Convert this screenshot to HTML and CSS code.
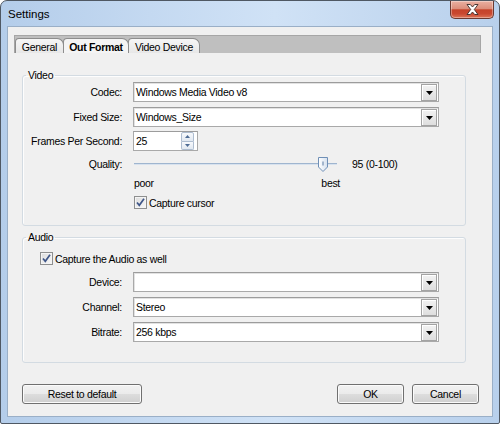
FILE: index.html
```html
<!DOCTYPE html>
<html>
<head>
<meta charset="utf-8">
<title>Settings</title>
<link rel="stylesheet" href="styles.css">
</head>
<body>
<div class="window">
  <div class="titlebar">
    <span class="title">Settings</span>
    <div class="close">
      <svg width="13" height="11" viewBox="0 0 13 11"><path d="M1 0.5 H4.3 L6.5 3 L8.7 0.5 H12 L8.3 5.5 L12 10.5 H8.7 L6.5 8 L4.3 10.5 H1 L4.7 5.5 Z" fill="#fff" stroke="#3a2a28" stroke-width="0.9" stroke-linejoin="round"/></svg>
    </div>
  </div>
  <div class="client">
    <div class="tabs">
      <div class="tab tab-general">General</div>
      <div class="tab tab-out active">Out Format</div>
      <div class="tab tab-video">Video Device</div>
    </div>
    <div class="sheet">
      <fieldset class="group group-video">
        <legend>Video</legend>
        <div class="row">
          <label>Codec:</label>
          <div class="combo"><span>Windows Media Video v8</span><span class="drop"><svg width="7" height="4" viewBox="0 0 7 4"><path d="M0 0H7L3.5 4Z" fill="#000"/></svg></span></div>
        </div>
        <div class="row row-fixed">
          <label>Fixed Size:</label>
          <div class="combo"><span>Windows_Size</span><span class="drop"><svg width="7" height="4" viewBox="0 0 7 4"><path d="M0 0H7L3.5 4Z" fill="#000"/></svg></span></div>
        </div>
        <div class="row row-fps">
          <label>Frames Per Second:</label>
          <div class="spin"><span>25</span>
            <span class="spin-btns">
              <span class="spin-up"><svg width="5" height="3" viewBox="0 0 5 3"><path d="M0 3H5L2.5 0Z" fill="#4d6b94"/></svg></span>
              <span class="spin-down"><svg width="5" height="3" viewBox="0 0 5 3"><path d="M0 0H5L2.5 3Z" fill="#4d6b94"/></svg></span>
            </span>
          </div>
        </div>
        <div class="row row-quality">
          <label>Quality:</label>
          <div class="slider">
            <div class="track"></div>
            <svg class="thumb" width="10" height="15" viewBox="0 0 10 15">
              <defs><linearGradient id="tg" x1="0" y1="0" x2="1" y2="0"><stop offset="0" stop-color="#ffffff"/><stop offset="1" stop-color="#d5e0ee"/></linearGradient></defs>
              <path d="M0.5 0.5H9.5V10L5 14.5L0.5 10Z" fill="url(#tg)" stroke="#6f8fb6"/>
              <path d="M5 4.5V8.5" stroke="#5a7aa3" stroke-width="1"/>
            </svg>
          </div>
          <span class="quality-value">95 (0-100)</span>
        </div>
        <div class="row row-scale">
          <div class="scale"><span>poor</span><span>best</span></div>
        </div>
        <div class="row row-check">
          <span class="check"><svg width="11" height="11" viewBox="0 0 11 11"><path d="M2 5.5L4.3 8.3L9 1.8" fill="none" stroke="#3f5688" stroke-width="1.7"/></svg></span>
          <span class="check-label">Capture cursor</span>
        </div>
      </fieldset>

      <fieldset class="group group-audio">
        <legend>Audio</legend>
        <div class="row row-audio-check">
          <span class="check"><svg width="11" height="11" viewBox="0 0 11 11"><path d="M2 5.5L4.3 8.3L9 1.8" fill="none" stroke="#3f5688" stroke-width="1.7"/></svg></span>
          <span class="check-label">Capture the Audio as well</span>
        </div>
        <div class="row row-device">
          <label>Device:</label>
          <div class="combo"><span></span><span class="drop"><svg width="7" height="4" viewBox="0 0 7 4"><path d="M0 0H7L3.5 4Z" fill="#000"/></svg></span></div>
        </div>
        <div class="row row-next">
          <label>Channel:</label>
          <div class="combo"><span>Stereo</span><span class="drop"><svg width="7" height="4" viewBox="0 0 7 4"><path d="M0 0H7L3.5 4Z" fill="#000"/></svg></span></div>
        </div>
        <div class="row row-next">
          <label>Bitrate:</label>
          <div class="combo"><span>256 kbps</span><span class="drop"><svg width="7" height="4" viewBox="0 0 7 4"><path d="M0 0H7L3.5 4Z" fill="#000"/></svg></span></div>
        </div>
      </fieldset>
    </div>
    <div class="buttons">
      <button class="btn btn-reset">Reset to default</button>
      <span class="spacer"></span>
      <button class="btn btn-ok">OK</button>
      <button class="btn btn-cancel">Cancel</button>
    </div>
  </div>
</div>
</body>
</html>
```

FILE: styles.css
```css
* { box-sizing: border-box; }
html, body { margin: 0; padding: 0; }
body {
  width: 500px;
  height: 424px;
  overflow: hidden;
  background: #ffffff;
  font-family: "Liberation Sans", Arial, sans-serif;
  font-size: 10.5px;
  letter-spacing: -0.3px;
  color: #000;
}

.window {
  width: 500px;
  height: 424px;
  border: 1px solid #4f5863;
  border-radius: 7px 7px 2px 2px;
  background: linear-gradient(90deg, #b4cdea 0%, #c4d9f1 30%, #d0e2f6 55%, #c3d8f0 80%, #b8d0ec 100%);
  padding: 0 6px 6px;
  display: flex;
  flex-direction: column;
}

.titlebar {
  height: 25px;
  margin: 0 -6px;
  padding: 0 5px 0 7px;
  display: flex;
  justify-content: space-between;
  align-items: flex-start;
}
.title {
  margin-top: 6px;
  line-height: 14px;
  font-size: 11.5px;
  letter-spacing: 0;
  color: #000;
}
.close {
  width: 44px;
  height: 18px;
  border: 1px solid #6b3931;
  border-top: none;
  border-radius: 0 0 5px 5px;
  background: linear-gradient(#eab0a2 0%, #dc8e7b 45%, #c5432a 52%, #c94830 75%, #dd7558 100%);
  box-shadow: inset 0 0 0 1px rgba(255,255,255,0.35);
  display: flex;
  align-items: center;
  justify-content: center;
}

.client {
  flex: 1;
  border: 1px solid #9aafc7;
  background: #f0f0f0;
  display: flex;
  flex-direction: column;
}

.tabs {
  margin: 8px 11px 0 6px;
  height: 18px;
  border: 1px solid #a6a6a6;
  border-bottom: none;
  background: #bfbfbf;
  padding-top: 2px;
  display: flex;
  align-items: flex-end;
}
.tab {
  height: 15px;
  border: 1px solid #8d8d8d;
  border-bottom: none;
  border-radius: 4px 7px 0 0;
  background: linear-gradient(#f6f6f6, #e7e7e7);
  display: flex;
  align-items: center;
  justify-content: center;
  margin-right: -1px;
  padding-top: 1px;
}
.tab-general { width: 49px; }
.tab-out { width: 66px; }
.tab-video { width: 72px; }
.tab.active {
  font-weight: bold;
  background: #f4f4f4;
  position: relative;
  z-index: 1;
}

.sheet {
  display: flex;
  flex-direction: column;
}

.group {
  margin: 0 0 0 14px;
  width: 444px;
  min-width: 0;
  padding: 0;
  border: 1px solid #d3dbe2;
  border-radius: 3px;
  box-shadow: inset 1px 1px 0 #fdfdfd;
}
.group legend {
  margin-left: 3px;
  padding: 0 2px;
  height: 13px;
  line-height: 13px;
}
.group-video { margin-top: 16px; padding-bottom: 16px; }
.group-audio { margin-top: 5px; padding-bottom: 20px; }

.row {
  display: flex;
  align-items: center;
  height: 20px;
}
.row label {
  width: 99px;
  margin-right: 11px;
  text-align: right;
  flex: none;
}
.row-fixed { margin-top: 5px; }
.row-fps { margin-top: 4px; }
.row-quality { margin-top: 6px; height: 14px; }
.row-scale { margin-top: 5px; height: 13px; }
.row-check { margin-top: 7px; height: 13px; padding-left: 111px; }
.row-audio-check { margin-top: 8px; height: 13px; padding-left: 17px; }
.row-device { margin-top: 7px; }
.row-next { margin-top: 5px; }

.combo {
  width: 306px;
  height: 20px;
  border: 1px solid #a9a9a9;
  border-top-color: #9c9c9c;
  background: #fff;
  box-shadow: inset 1px 1px 0 #e2e2e2;
  display: flex;
  align-items: center;
  padding-left: 2px;
  padding-right: 1px;
}
.drop {
  margin-left: auto;
  width: 16px;
  height: 17px;
  border: 1px solid #a3a3a3;
  background: linear-gradient(#f2f2f2, #dedede);
  box-shadow: inset 1px 1px 0 #fff;
  display: flex;
  align-items: center;
  justify-content: center;
  padding-top: 1px;
}

.spin {
  width: 65px;
  height: 20px;
  border: 1px solid #a9a9a9;
  border-top-color: #9c9c9c;
  background: #fff;
  display: flex;
  align-items: center;
  padding-left: 2px;
  padding-right: 3px;
}
.spin-btns {
  margin-left: auto;
  width: 13px;
  height: 18px;
  display: flex;
  flex-direction: column;
}
.spin-up, .spin-down {
  flex: 1;
  border: 1px solid #aebdd0;
  background: linear-gradient(#f7f9fc, #e1e8f1);
  display: flex;
  align-items: center;
  justify-content: center;
}
.spin-up { border-radius: 2px 2px 0 0; }
.spin-down { border-top: none; border-radius: 0 0 2px 2px; }

.slider {
  position: relative;
  width: 203px;
  height: 14px;
  margin-left: 1px;
  display: flex;
  align-items: center;
}
.track {
  width: 100%;
  height: 2px;
  border-top: 1px solid #9fb5cf;
  border-bottom: 1px solid #d8e2ee;
}
.thumb {
  position: absolute;
  left: 184px;
  top: 0;
}
.quality-value {
  margin-left: 15px;
}

.scale {
  margin-left: 111px;
  width: 206px;
  display: flex;
  justify-content: space-between;
}

.check {
  width: 13px;
  height: 13px;
  border: 1px solid #8e8f8f;
  background: linear-gradient(135deg, #dcdcdc, #f8f8f8);
  box-shadow: inset 0 0 0 1px #f4f4f4;
  display: flex;
  align-items: center;
  justify-content: center;
  flex: none;
}
.check-label { margin-left: 2px; }

.buttons {
  margin: 21px 13px 0 14px;
  display: flex;
  align-items: center;
}
.spacer { flex: 1; }
.btn {
  height: 20px;
  padding: 0;
  border: 1px solid #707070;
  border-radius: 3px;
  background: linear-gradient(#f2f2f2 0%, #ebebeb 48%, #dddddd 52%, #cfcfcf 100%);
  box-shadow: inset 0 0 0 1px #fbfbfb;
  font-family: "Liberation Sans", Arial, sans-serif;
  font-size: 10.5px;
  letter-spacing: -0.3px;
  color: #000;
}
.btn-reset { width: 120px; }
.btn-ok { width: 67px; }
.btn-cancel { width: 67px; margin-left: 8px; }
```
